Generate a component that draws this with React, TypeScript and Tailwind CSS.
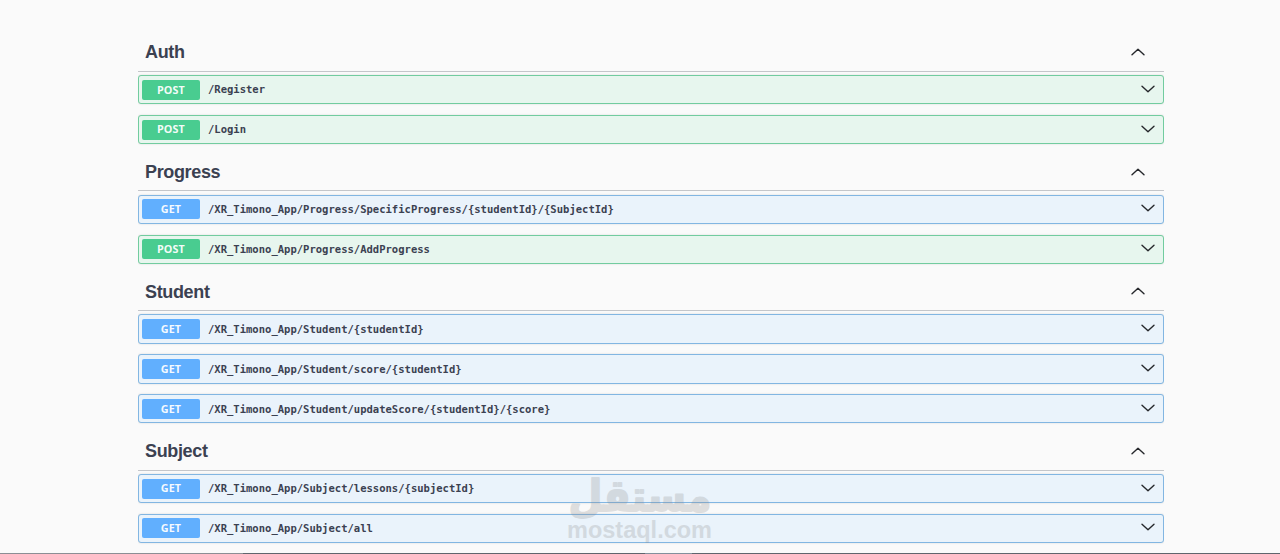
import React from "react";

type Method = "GET" | "POST";

interface Endpoint {
  method: Method;
  path: string;
}

interface Section {
  name: string;
  endpoints: Endpoint[];
}

const sections: Section[] = [
  {
    name: "Auth",
    endpoints: [
      { method: "POST", path: "/Register" },
      { method: "POST", path: "/Login" },
    ],
  },
  {
    name: "Progress",
    endpoints: [
      { method: "GET", path: "/XR_Timono_App/Progress/SpecificProgress/{studentId}/{SubjectId}" },
      { method: "POST", path: "/XR_Timono_App/Progress/AddProgress" },
    ],
  },
  {
    name: "Student",
    endpoints: [
      { method: "GET", path: "/XR_Timono_App/Student/{studentId}" },
      { method: "GET", path: "/XR_Timono_App/Student/score/{studentId}" },
      { method: "GET", path: "/XR_Timono_App/Student/updateScore/{studentId}/{score}" },
    ],
  },
  {
    name: "Subject",
    endpoints: [
      { method: "GET", path: "/XR_Timono_App/Subject/lessons/{subjectId}" },
      { method: "GET", path: "/XR_Timono_App/Subject/all" },
    ],
  },
];

const rowStyles: Record<Method, string> = {
  GET: "border-[#82b6e2] bg-[#eaf3fb]",
  POST: "border-[#72cc9f] bg-[#e7f6ee]",
};

const badgeStyles: Record<Method, string> = {
  GET: "bg-[#61affe]",
  POST: "bg-[#49cc90]",
};

function Chevron({ up = false }: { up?: boolean }) {
  return (
    <svg className="mb-[2px]" width="14" height="8" viewBox="0 0 14 8" fill="none" stroke="#26282c" strokeWidth="1.4" strokeLinecap="round" strokeLinejoin="round">
      <path d={up ? "M1 6.8 L7 1.2 L13 6.8" : "M1 1.2 L7 6.8 L13 1.2"} />
    </svg>
  );
}

function EndpointRow({ method, path }: Endpoint) {
  return (
    <div className={`mb-[10.5px] flex h-[29.4px] items-center rounded-[3px] border pl-[3.4px] pr-[8px] shadow-[0_0_2px_rgba(0,0,0,0.15)] ${rowStyles[method]}`}>
      <span
        className={`flex h-[20px] w-[58px] items-center justify-center rounded-[2px] pr-px font-['Open_Sans',sans-serif] text-[10.8px] font-bold text-white/95 ${badgeStyles[method]}`}
      >
        {method}
      </span>
      <span className="ml-[7.6px] flex-1 whitespace-nowrap pt-[1.4px] font-['DejaVu_Sans_Mono',monospace] text-[10.54px] font-bold text-[#3b4151]">
        {path}
      </span>
      <Chevron />
    </div>
  );
}

function SectionBlock({ name, endpoints }: Section) {
  return (
    <section>
      <div className="mb-[3.2px] flex h-[36.7px] items-center justify-between border-b border-[#c4c6ca] pl-[7px] pr-[19px]">
        <h3 className="pb-px font-['Liberation_Sans',Arial,sans-serif] text-[18px] font-bold leading-none tracking-[-0.35px] text-[#3b4151]">{name}</h3>
        <Chevron up />
      </div>
      {endpoints.map((endpoint) => (
        <EndpointRow key={endpoint.path} {...endpoint} />
      ))}
    </section>
  );
}

function Watermark() {
  return (
    <svg className="pointer-events-none absolute left-[560px] top-[468px] opacity-[0.24]" width="160" height="80" viewBox="0 0 160 80" fill="#888">
      <text
        x="80"
        y="0"
        transform="translate(0 43) scale(1 1.15)"
        textAnchor="middle"
        direction="rtl"
        fontFamily="DejaVu Sans, sans-serif"
        fontWeight="700"
        fontSize="38"
        textLength="143"
        lengthAdjust="spacingAndGlyphs"
        stroke="#888"
        strokeWidth="1.6"
        strokeLinejoin="round"
      >
        مستقل
      </text>
      <text x="7" y="70" fontFamily="Liberation Sans, Arial, sans-serif" fontWeight="700" fontSize="23.5" textLength="145" lengthAdjust="spacingAndGlyphs">
        mostaql.com
      </text>
    </svg>
  );
}

export default function App() {
  return (
    <div className="relative flex h-[554px] w-[1280px] flex-col overflow-hidden bg-[#fafafa]">
      <main className="ml-[138px] h-[553px] w-[1026px] shrink-0 overflow-hidden pt-[35.1px]">
        {sections.map((section) => (
          <SectionBlock key={section.name} {...section} />
        ))}
      </main>
      <div className="flex h-px shrink-0 bg-[#5f656d]">
        <div className="w-[243px] bg-[#8b8e94]" />
        <div className="ml-[402px] w-[47px] bg-[#82909c]" />
      </div>
      <Watermark />
    </div>
  );
}
